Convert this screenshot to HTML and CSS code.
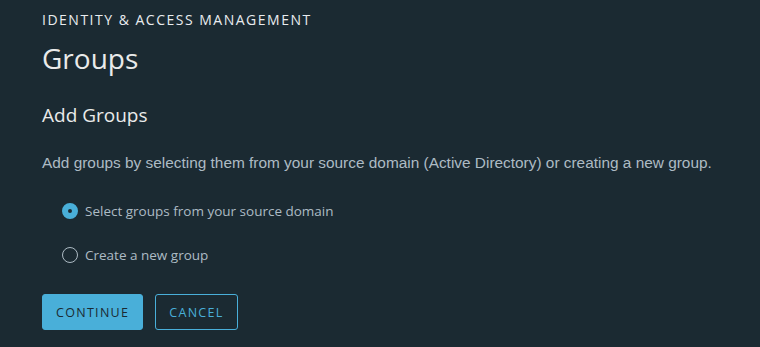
FILE: index.html
```html
<!DOCTYPE html>
<html>
<head>
    <title>Groups</title>
    <link rel="stylesheet" href="styles.css">
</head>
<body>
    <div class="page">
        <div class="eyebrow">IDENTITY &amp; ACCESS MANAGEMENT</div>
        <h1>Groups</h1>
        <h2>Add Groups</h2>
        <p class="intro">Add groups by selecting them from your source domain (Active Directory) or creating a new group.</p>
        <form class="choices">
            <label class="radio">
                <input type="radio" name="mode" checked>
                <span>Select groups from your source domain</span>
            </label>
            <label class="radio">
                <input type="radio" name="mode">
                <span>Create a new group</span>
            </label>
            <div class="actions">
                <button type="button" class="btn primary">CONTINUE</button>
                <button type="button" class="btn outline">CANCEL</button>
            </div>
        </form>
    </div>
</body>
</html>
```

FILE: styles.css
```css
html, body {
    margin: 0;
    background: #1b2a32;
}
body {
    font-family: "Open Sans", Lato, sans-serif;
    color: #eaeaea;
}
.page {
    padding: 12px 42px;
}
.eyebrow {
    font-size: 14px;
    letter-spacing: 1.5px;
    line-height: 16px;
    color: #e9ecef;
}
h1 {
    margin: 12px 0 0;
    font-size: 28px;
    font-weight: 400;
    line-height: 36px;
    color: #eaeaea;
}
h2 {
    margin: 27px 0 0;
    font-size: 19px;
    font-weight: 400;
    line-height: 24px;
    color: #eaeaea;
}
.intro {
    margin: 26px 0 0;
    font-family: "Liberation Sans", Arial, sans-serif;
    font-size: 15.4px;
    line-height: 20px;
    color: #adbbc4;
}
.choices {
    margin: 26px 0 0 20px;
}
.radio {
    display: flex;
    align-items: center;
    gap: 7px;
    height: 24px;
    margin-bottom: 20px;
    font-size: 13.5px;
    color: #adbbc4;
}
.radio input {
    appearance: none;
    margin: 0;
    width: 16px;
    height: 16px;
    border-radius: 50%;
    border: 1px solid #adbbc4;
    box-sizing: border-box;
}
.radio input:checked {
    border: 6px solid #49afd9;
    background: #1b2a32;
}
.actions {
    display: flex;
    gap: 12px;
    margin: 27px 0 0 -20px;
}
.btn {
    height: 36px;
    padding: 0 13px;
    border-radius: 3px;
    font-family: "Open Sans", sans-serif;
    font-size: 12.5px;
    letter-spacing: 1.3px;
    cursor: pointer;
}
.primary {
    background: #49afd9;
    border: 1px solid #49afd9;
    color: #1b2a32;
}
.outline {
    background: transparent;
    border: 1px solid #49afd9;
    color: #49afd9;
}
```
